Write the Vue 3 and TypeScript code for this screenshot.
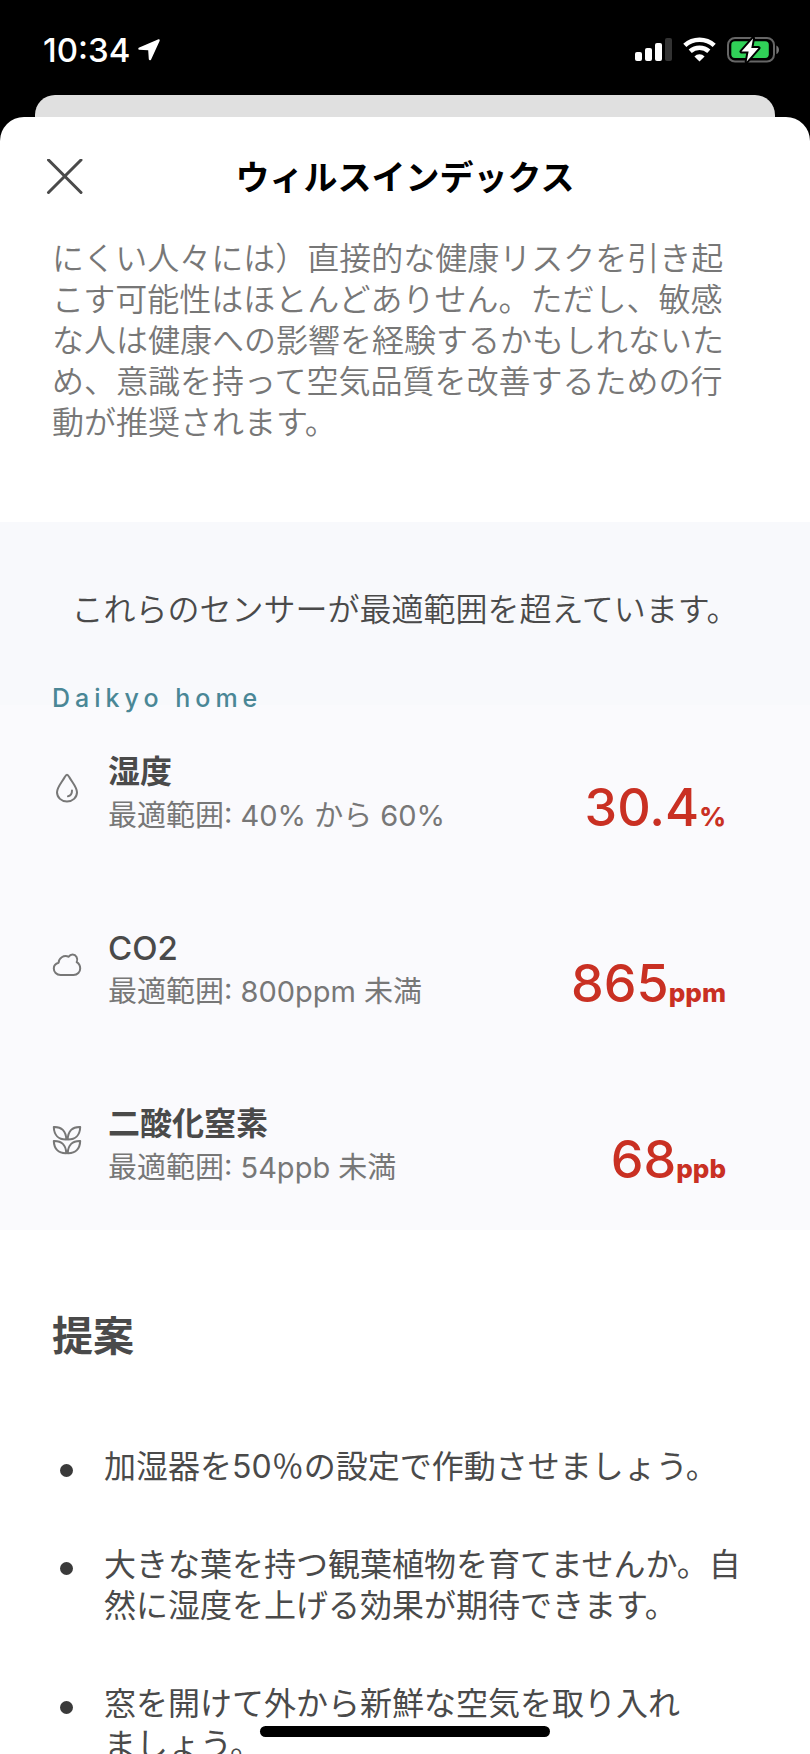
<script setup lang="ts">
interface Sensor {
  id: 'humidity' | 'co2' | 'no2'
  name: string
  range: string
  value: string
  unit: string
}

const location = 'Daikyo home'

const sensors: Sensor[] = [
  { id: 'humidity', name: '湿度', range: '最適範囲: 40% から 60%', value: '30.4', unit: '%' },
  { id: 'co2', name: 'CO2', range: '最適範囲: 800ppm 未満', value: '865', unit: 'ppm' },
  { id: 'no2', name: '二酸化窒素', range: '最適範囲: 54ppb 未満', value: '68', unit: 'ppb' },
]

// Formulas written in Latin letters get a lighter, slightly larger heading.
const isLatin = (name: string): boolean => /^[A-Za-z0-9]+$/.test(name)

const suggestions: string[] = [
  '加湿器を50％の設定で作動させましょう。',
  '大きな葉を持つ観葉植物を育てませんか。自然に湿度を上げる効果が期待できます。',
  '窓を開けて外から新鮮な空気を取り入れ\nましょう。',
]
</script>

<template>
  <div class="screen">
    <header class="status">
      <div class="clock">
        <time>10:34</time>
        <svg class="arrow" width="24" height="24" viewBox="0 0 24 24" aria-hidden="true">
          <path d="M21.500 1.300 1.700 9.700Q.4 11 2 11.700L11.200 12.200 11.800 21.200Q12.500 23.200 14 21.700L22.700 2.700Q22.900 1 21.500 1.300Z" fill="#fff" />
        </svg>
      </div>
      <div class="indicators">
        <svg width="38" height="26" viewBox="0 0 38 26" aria-hidden="true">
          <rect x="0" y="15" width="7" height="9" rx="2" fill="#fff" />
          <rect x="10" y="11" width="7" height="13" rx="2" fill="#fff" />
          <rect x="20" y="6" width="7" height="18" rx="2" fill="#fff" />
          <rect x="30" y="1" width="7" height="23" rx="2" fill="#333" />
        </svg>
        <svg width="34" height="26" viewBox="0 0 34 26" aria-hidden="true">
          <g fill="none" stroke="#fff" stroke-width="4.6">
            <path d="M1.800 8.400a21.800 21.800 0 0 1 29.400 0" />
            <path d="M7.200 14.300a13.800 13.800 0 0 1 18.600 0" />
          </g>
          <path d="M16.500 24.400 11.400 19.400a7.3 7.3 0 0 1 10.2 0Z" fill="#fff" />
        </svg>
        <svg width="53" height="26" viewBox="0 0 53 26" aria-hidden="true">
          <rect x="1" y="1" width="46" height="23.5" rx="7" fill="none" stroke="#666" stroke-width="2" />
          <path d="M49.4 8.4c3.4 1.4 3.4 7.2 0 8.600Z" fill="#777" />
          <rect x="4.300" y="4.300" width="37.500" height="16.600" rx="3.600" fill="#30d158" />
          <path d="M26 1.500 14.500 14.500H21.600L19.700 24.500 31.500 10.900H24.300Z" fill="#fff" stroke="#000" stroke-width="4" stroke-linejoin="round" />
          <path d="M26 1.500 14.500 14.500H21.600L19.700 24.500 31.500 10.900H24.300Z" fill="#fff" />
        </svg>
      </div>
    </header>

    <div class="card-behind"></div>

    <main class="sheet">
      <div class="titlebar">
        <button class="close" type="button" aria-label="閉じる">
          <svg width="38" height="38" viewBox="0 0 38 38" aria-hidden="true">
            <path d="M2.500 1 35 33.500M35 1 2.500 33.500" stroke="#4a4a4a" stroke-width="3" stroke-linecap="round" />
          </svg>
        </button>
        <h1>ウィルスインデックス</h1>
      </div>

      <p class="intro">にくい人々には）直接的な健康リスクを引き起こす可能性はほとんどありせん。ただし、敏感な人は健康への影響を経験するかもしれないため、意識を持って空気品質を改善するための行動が推奨されます。</p>

      <section class="sensors">
        <p class="notice">これらのセンサーが最適範囲を超えています。</p>
        <h2 class="location">{{ location }}</h2>
        <ul class="sensor-list">
          <li v-for="s in sensors" :key="s.id" class="sensor">
            <svg class="icon" width="30" height="30" viewBox="0 0 30 30" aria-hidden="true">
              <template v-if="s.id === 'humidity'">
                <path d="M15 1.700C14 1.700 13.500 2.700 12.800 4 10 9 5 14.200 5 19.300A10 9.300 0 0 0 25 19.300C25 14.200 20 9 17.200 4 16.500 2.700 16 1.700 15 1.700Z" />
                <path d="M20 17.500C20 21 18.800 22.800 16 23.300" />
              </template>
              <path v-else-if="s.id === 'co2'" d="M8.500 26H21.500C25.500 26 28.200 23 28.200 19.400C28.200 16.500 26.800 14.500 24.700 13.200C26.400 9.300 24 5.500 20.600 5.500C18.800 5.500 17.500 6.400 16.700 7.700C11.500 5.800 6.800 9 6.600 13.700C3.500 14.500 1.800 16.600 1.800 19.400C1.800 23 4.500 26 8.500 26Z" />
              <template v-else>
                <path d="M1.800 2C9.500 1.600 14 6 14.300 14.500C6.500 14.700 2 9.800 1.800 2Z" />
                <path d="M28.200 2C20.500 1.600 16 6 15.700 14.500C23.500 14.700 28 9.800 28.200 2Z" />
                <path d="M1.800 15.900C9.500 15.600 14 20 14.300 28.200C6.500 28.500 2 23.800 1.800 15.900Z" />
                <path d="M28.200 15.900C20.500 15.600 16 20 15.700 28.200C23.500 28.500 28 23.800 28.200 15.900Z" />
              </template>
            </svg>
            <div class="details">
              <h3 :class="{ latin: isLatin(s.name) }">{{ s.name }}</h3>
              <p>{{ s.range }}</p>
            </div>
            <p class="reading">{{ s.value }}<span>{{ s.unit }}</span></p>
          </li>
        </ul>
      </section>

      <section class="suggestions">
        <h2>提案</h2>
        <ul>
          <li v-for="text in suggestions" :key="text">{{ text }}</li>
        </ul>
      </section>
    </main>

    <div class="home-indicator"></div>
  </div>
</template>

<style>
body {
  margin: 0;
  background: #000;
}
</style>

<style scoped>
.screen {
  position: relative;
  display: flex;
  flex-direction: column;
  height: 100vh;
  overflow: hidden;
  background: #000;
  color: #4a4a4a;
  font-family: Inter, "Noto Sans CJK JP", sans-serif;
}

h1,
h2,
h3,
p,
ul {
  margin: 0;
  padding: 0;
}

ul {
  list-style: none;
}

.status {
  display: flex;
  flex: none;
  align-items: center;
  justify-content: space-between;
  height: 95px;
  padding: 4px 30px 0 43px;
  box-sizing: border-box;
}

.clock,
.indicators {
  display: flex;
  align-items: center;
  gap: 10px;
}

.clock {
  gap: 7px;
  color: #fff;
  font-size: 33px;
  font-weight: 500;
  line-height: 40px;
}

.card-behind {
  flex: none;
  height: 22px;
  margin: 0 35px;
  border-radius: 20px 20px 0 0;
  background: #e0e0e0;
}

.sheet {
  flex: 1;
  min-height: 0;
  overflow: hidden;
  border-radius: 24px 24px 0 0;
  background: #fff;
}

.titlebar {
  display: grid;
  grid-template-columns: 38px 1fr 38px;
  align-items: center;
  height: 121px;
  padding: 0 46px;
}

.close {
  display: flex;
  padding: 0;
  border: 0;
  background: none;
}

h1 {
  color: #000;
  font-size: 34px;
  font-weight: 700;
  line-height: 50px;
  text-align: center;
}

.intro {
  padding: 0 80px 79px 52px;
  color: #777;
  font-size: 32px;
  font-weight: 350;
  line-height: 41px;
}

.sensors {
  padding: 67px 84px 41px 52px;
  background: linear-gradient(#f8f9fc 183px, #fafafd 183px);
}

.notice {
  margin: 0 -32px 52px 0;
  font-size: 32px;
  font-weight: 350;
  line-height: 41px;
  text-align: center;
}

.location {
  margin-bottom: 35px;
  color: #4a8796;
  font-size: 25px;
  font-weight: 500;
  letter-spacing: 5px;
  line-height: 32px;
}

.sensor-list {
  display: grid;
  gap: 88px;
}

.sensor {
  display: flex;
  align-items: center;
  height: 88px;
}

.icon {
  flex: none;
  margin: 0 26px 10px 0;
  fill: none;
  stroke: #777;
  stroke-width: 2;
  stroke-linecap: round;
  stroke-linejoin: round;
}

.details {
  flex: 1;
}

.details h3 {
  font-size: 32px;
  font-weight: 600;
  line-height: 46px;
}

.details h3.latin {
  font-size: 33px;
  font-weight: 500;
}

.details p {
  color: #777;
  font-size: 29px;
  font-weight: 400;
  line-height: 42px;
}

.reading {
  align-self: flex-end;
  color: #c93023;
  font-size: 52px;
  font-weight: 500;
  line-height: 40px;
}

.reading span {
  font-size: 26px;
  font-weight: 800;
}

.suggestions {
  padding: 81px 60px 0 52px;
}

.suggestions h2 {
  margin-bottom: 85px;
  font-size: 41px;
  font-weight: 700;
  line-height: 50px;
}

.suggestions ul {
  display: grid;
  gap: 57px;
}

.suggestions li {
  display: flex;
  gap: 31px;
  padding-left: 8px;
  font-size: 32px;
  font-weight: 400;
  line-height: 41px;
  white-space: pre-line;
}

.suggestions li::before {
  content: "";
  flex: none;
  width: 13px;
  height: 13px;
  margin-top: 18px;
  border-radius: 50%;
  background: #3a3a3a;
}

.home-indicator {
  position: absolute;
  bottom: 17px;
  left: 50%;
  width: 290px;
  height: 11px;
  margin-left: -145px;
  border-radius: 6px;
  background: #000;
}
</style>
